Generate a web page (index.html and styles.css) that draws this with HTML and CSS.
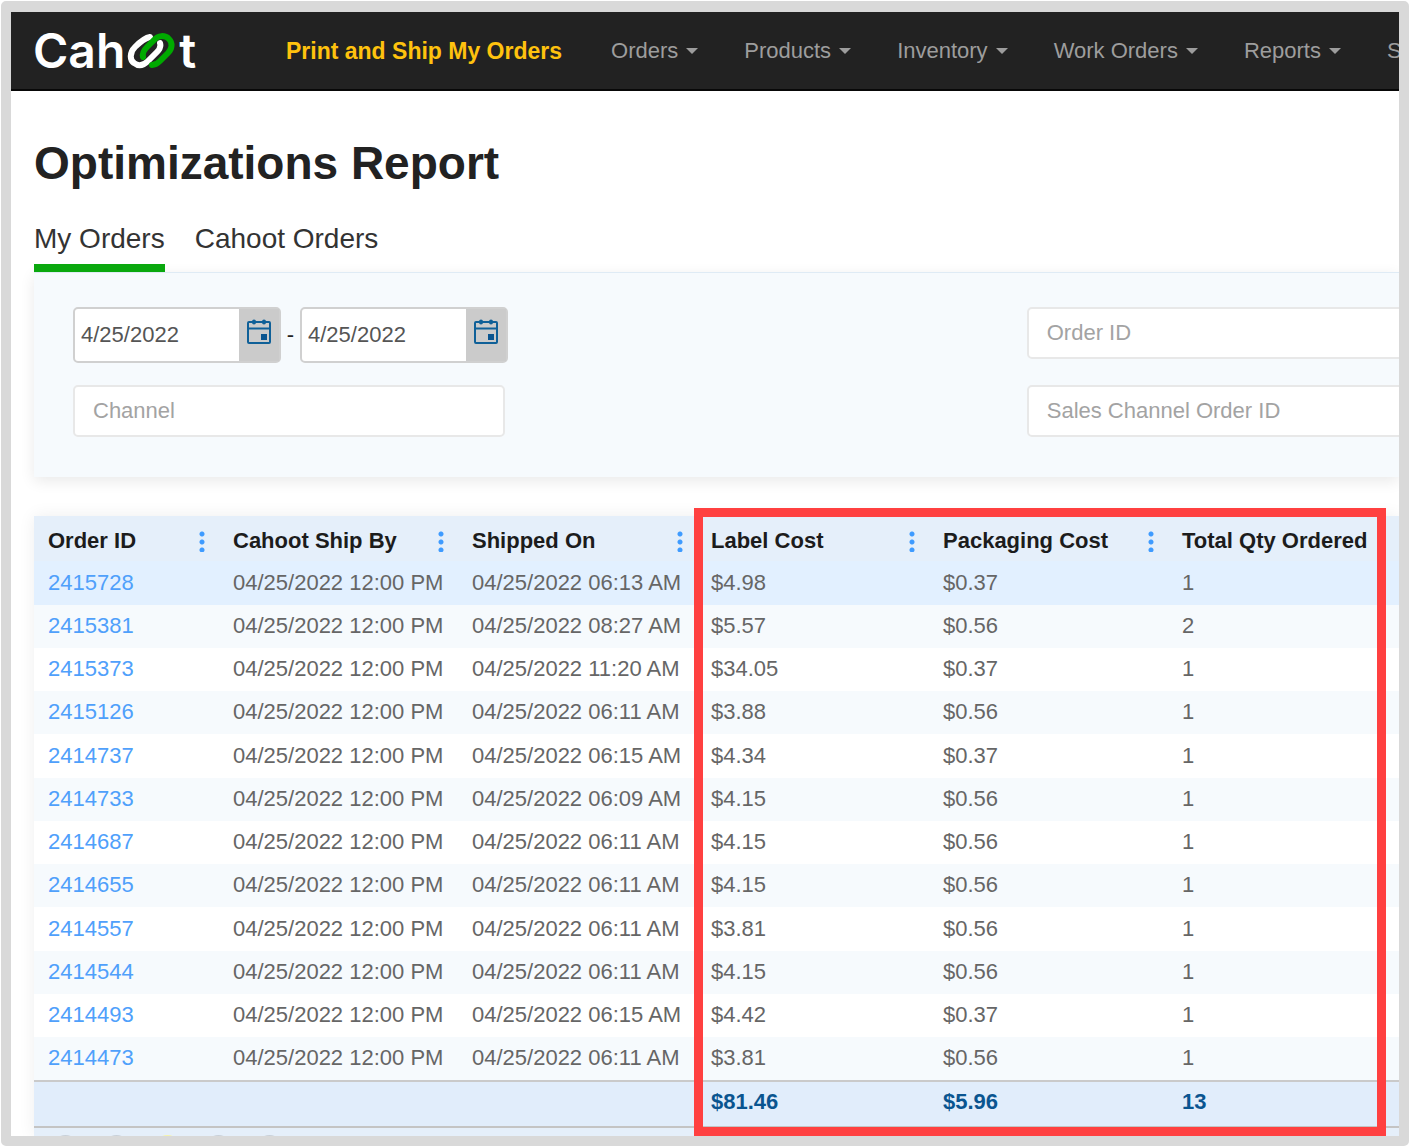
FILE: index.html
```html
<!DOCTYPE html>
<html lang="en">
<head>
<meta charset="utf-8">
<title>Optimizations Report</title>
<link rel="stylesheet" href="styles.css">
</head>
<body>
<div class="frame">
  <header class="navbar">
    <a class="logo" href="#" aria-label="Cahoot">
      <span>Cah</span>
      <svg class="logo-link" width="50" height="38" viewBox="0 0 50 38" fill="none" stroke-width="6" stroke-linecap="round" aria-hidden="true">
        <path stroke="#fff" d="M23 5C17 6 12 11 8 15C2 21 3 28 7 31C12 35 17 33 21 29L30 20C33 17 34 14 33 11"/>
        <path stroke="#0a0" d="M16 25C15 21 17 18 20 15L27 8C31 3 38 3 42 7C46 11 45 17 41 21L33 29C30 32 28 33 25 33"/>
      </svg>
      <span>t</span>
    </a>
    <nav class="menu">
      <a class="menu-primary" href="#">Print and Ship My Orders</a>
      <a class="menu-item" href="#">Orders</a>
      <a class="menu-item" href="#">Products</a>
      <a class="menu-item" href="#">Inventory</a>
      <a class="menu-item" href="#">Work Orders</a>
      <a class="menu-item" href="#">Reports</a>
      <a class="menu-item" href="#">Settings</a>
    </nav>
  </header>

  <main class="content">
    <h1>Optimizations Report</h1>
    <div class="tabs">
      <a class="tab tab-active" href="#">My Orders</a>
      <a class="tab" href="#">Cahoot Orders</a>
    </div>

    <form class="filters">
      <div class="date-range">
        <div class="date">
          <input type="text" value="4/25/2022" aria-label="From date">
          <button type="button" aria-label="Pick from date">
            <svg width="24" height="26" viewBox="0 0 24 26" fill="none" stroke="#0f6098" stroke-width="2" aria-hidden="true"><rect x="1" y="3" width="22" height="21" rx="1"/><path d="M1 9.500H23"/><path stroke-width="4" stroke-linecap="round" d="M7 2.500V3.500M17 2.500V3.500"/><path fill="#0a5590" stroke="none" d="M14 15h6v6h-6z"/></svg>
          </button>
        </div>
        <span class="dash">-</span>
        <div class="date">
          <input type="text" value="4/25/2022" aria-label="To date">
          <button type="button" aria-label="Pick to date">
            <svg width="24" height="26" viewBox="0 0 24 26" fill="none" stroke="#0f6098" stroke-width="2" aria-hidden="true"><rect x="1" y="3" width="22" height="21" rx="1"/><path d="M1 9.500H23"/><path stroke-width="4" stroke-linecap="round" d="M7 2.500V3.500M17 2.500V3.500"/><path fill="#0a5590" stroke="none" d="M14 15h6v6h-6z"/></svg>
          </button>
        </div>
      </div>
      <input class="field" type="text" placeholder="Order ID" aria-label="Order ID">
      <input class="field" type="text" placeholder="Channel" aria-label="Channel">
      <input class="field" type="text" placeholder="Sales Channel Order ID" aria-label="Sales Channel Order ID">
    </form>

    <section class="report">
      <table>
        <colgroup><col class="c-id"><col class="c-ship"><col class="c-ship"><col class="c-label"><col class="c-pack"><col></colgroup>
        <thead>
          <tr>
            <th><div class="head">Order ID<button class="dots" aria-label="Order ID options"></button></div></th>
            <th><div class="head">Cahoot Ship By<button class="dots" aria-label="Cahoot Ship By options"></button></div></th>
            <th><div class="head">Shipped On<button class="dots" aria-label="Shipped On options"></button></div></th>
            <th><div class="head">Label Cost<button class="dots" aria-label="Label Cost options"></button></div></th>
            <th><div class="head">Packaging Cost<button class="dots" aria-label="Packaging Cost options"></button></div></th>
            <th><div class="head">Total Qty Ordered</div></th>
          </tr>
        </thead>
        <tbody>
          <tr class="selected"><td><a href="#">2415728</a></td><td>04/25/2022 12:00 PM</td><td>04/25/2022 06:13 AM</td><td>$4.98</td><td>$0.37</td><td>1</td></tr>
          <tr><td><a href="#">2415381</a></td><td>04/25/2022 12:00 PM</td><td>04/25/2022 08:27 AM</td><td>$5.57</td><td>$0.56</td><td>2</td></tr>
          <tr><td><a href="#">2415373</a></td><td>04/25/2022 12:00 PM</td><td>04/25/2022 11:20 AM</td><td>$34.05</td><td>$0.37</td><td>1</td></tr>
          <tr><td><a href="#">2415126</a></td><td>04/25/2022 12:00 PM</td><td>04/25/2022 06:11 AM</td><td>$3.88</td><td>$0.56</td><td>1</td></tr>
          <tr><td><a href="#">2414737</a></td><td>04/25/2022 12:00 PM</td><td>04/25/2022 06:15 AM</td><td>$4.34</td><td>$0.37</td><td>1</td></tr>
          <tr><td><a href="#">2414733</a></td><td>04/25/2022 12:00 PM</td><td>04/25/2022 06:09 AM</td><td>$4.15</td><td>$0.56</td><td>1</td></tr>
          <tr><td><a href="#">2414687</a></td><td>04/25/2022 12:00 PM</td><td>04/25/2022 06:11 AM</td><td>$4.15</td><td>$0.56</td><td>1</td></tr>
          <tr><td><a href="#">2414655</a></td><td>04/25/2022 12:00 PM</td><td>04/25/2022 06:11 AM</td><td>$4.15</td><td>$0.56</td><td>1</td></tr>
          <tr><td><a href="#">2414557</a></td><td>04/25/2022 12:00 PM</td><td>04/25/2022 06:11 AM</td><td>$3.81</td><td>$0.56</td><td>1</td></tr>
          <tr><td><a href="#">2414544</a></td><td>04/25/2022 12:00 PM</td><td>04/25/2022 06:11 AM</td><td>$4.15</td><td>$0.56</td><td>1</td></tr>
          <tr><td><a href="#">2414493</a></td><td>04/25/2022 12:00 PM</td><td>04/25/2022 06:15 AM</td><td>$4.42</td><td>$0.37</td><td>1</td></tr>
          <tr><td><a href="#">2414473</a></td><td>04/25/2022 12:00 PM</td><td>04/25/2022 06:11 AM</td><td>$3.81</td><td>$0.56</td><td>1</td></tr>
        </tbody>
        <tfoot>
          <tr><td></td><td></td><td></td><td>$81.46</td><td>$5.96</td><td>13</td></tr>
        </tfoot>
      </table>
      <div class="pager">
        <button aria-label="First page"></button>
        <button aria-label="Previous page"></button>
        <button class="current" aria-label="Current page"></button>
        <button aria-label="Next page"></button>
        <button aria-label="Last page"></button>
      </div>
      <div class="highlight"></div>
    </section>
  </main>
</div>
</body>
</html>
```

FILE: styles.css
```css
* { box-sizing: border-box; }

body {
  margin: 0;
  padding: 1px;
  background: #fff;
  color: #222;
  font: 22px/28px "Liberation Sans", Arial, sans-serif;
}

a { color: inherit; text-decoration: none; }
input, button { font: inherit; }
button { border: 0; padding: 0; cursor: pointer; }

.frame {
  min-height: calc(100vh - 2px);
  border: 10px solid #d9d9d9;
  border-top-width: 11px;
  border-radius: 5px;
  overflow: hidden;
}

/* Top bar */
.navbar {
  display: flex;
  align-items: center;
  height: 79px;
  padding-left: 22px;
  background: #222;
  border-bottom: 2px solid #080808;
  white-space: nowrap;
}

.logo {
  display: flex;
  flex: none;
  align-items: center;
  gap: 2px;
  width: 253px;
  color: #fff;
  font: 600 48px/60px Inter, sans-serif;
}

.menu { display: flex; gap: 46px; color: #9d9d9d; }
.menu-primary { margin-right: 3px; color: #ffc20e; font-size: 23px; font-weight: 700; }
.menu-item { display: flex; align-items: center; gap: 8px; }
.menu-item::after {
  content: "";
  border: 6px solid transparent;
  border-top-color: #9d9d9d;
  border-bottom: 0;
}

/* Page */
.content { padding: 44px 0 0 23px; }

h1 { margin: 0 0 32px; font-size: 46px; line-height: 56px; }

.tabs { display: flex; gap: 30px; font-size: 28px; line-height: 32px; color: #333; }
.tab { padding-bottom: 9px; border-bottom: 8px solid transparent; }
.tab-active { border-color: #0aa80e; }

.filters {
  display: grid;
  grid-template-columns: calc(72% - 1px) 432px;
  row-gap: 22px;
  padding: 34px 0 40px 39px;
  background: #f6fafd;
  border-top: 1px solid #dfebf5;
  box-shadow: 0 4px 14px rgba(0, 0, 0, .09);
}

.date-range { display: flex; }
.date {
  display: flex;
  width: 208px;
  height: 56px;
  border: 2px solid #d0d0d0;
  border-radius: 5px;
  background: #fff;
}
.date input {
  flex: 1;
  min-width: 0;
  padding: 0 6px;
  border: 0;
  background: none;
  color: #555;
}
.date button { display: grid; place-items: center; width: 40px; padding-bottom: 6px; background: #cbcbcb; }
.dash { width: 19px; line-height: 56px; text-align: center; }

.field {
  width: 432px;
  height: 52px;
  padding: 0 18px;
  border: 2px solid #e8e8e8;
  border-radius: 5px;
  background: #fff;
}
.field::placeholder { color: #a3a3a3; opacity: 1; }

/* Report table */
.report {
  position: relative;
  margin-top: 39px;
  box-shadow: 0 0 16px rgba(0, 0, 0, .07);
}

table { width: 100%; table-layout: fixed; border-collapse: separate; border-spacing: 0; }
.c-id { width: 185px; }
.c-ship { width: 239px; }
.c-label { width: 232px; }
.c-pack { width: 239px; }

th, td { height: 43px; padding: 0 0 1px 14px; text-align: left; white-space: nowrap; }
th { height: 45px; padding: 4px 0 0 14px; background: #e5effa; color: #1c1c1c; }

.head { display: flex; align-items: center; justify-content: space-between; padding-right: 14px; }
.dots {
  width: 6px;
  height: 22px;
  background: radial-gradient(circle, #3e9bff 2px, transparent 3px) 0 0 / 6px 8px;
}

td { color: #666; }
td a { color: #4fa0fb; }
tbody tr { background: #fff; }
tbody tr:nth-child(even) { background: #f6fafd; }
tbody .selected { background: #e2f0ff; }
tbody tr:nth-child(4n+1) td { height: 44px; }

tfoot td {
  height: 48px;
  padding-bottom: 4px;
  border-top: 2px solid #cacaca;
  border-bottom: 2px solid #c4c4c4;
  background: #e1edfb;
  color: #0a5590;
  font-weight: 700;
}

.pager {
  display: flex;
  gap: 24px;
  height: 8px;
  padding: 7px 0 0 18px;
  background: #e5effa;
  overflow: hidden;
}
.pager button { flex: none; width: 27px; height: 27px; border-radius: 50%; background: #c9d0d8; }
.pager .current { background: #f6f3a8; }

/* Callout drawn over the cost columns */
.highlight {
  position: absolute;
  inset: -8px 13px 0 660px;
  border: 9px solid #ff4040;
  pointer-events: none;
}
```
